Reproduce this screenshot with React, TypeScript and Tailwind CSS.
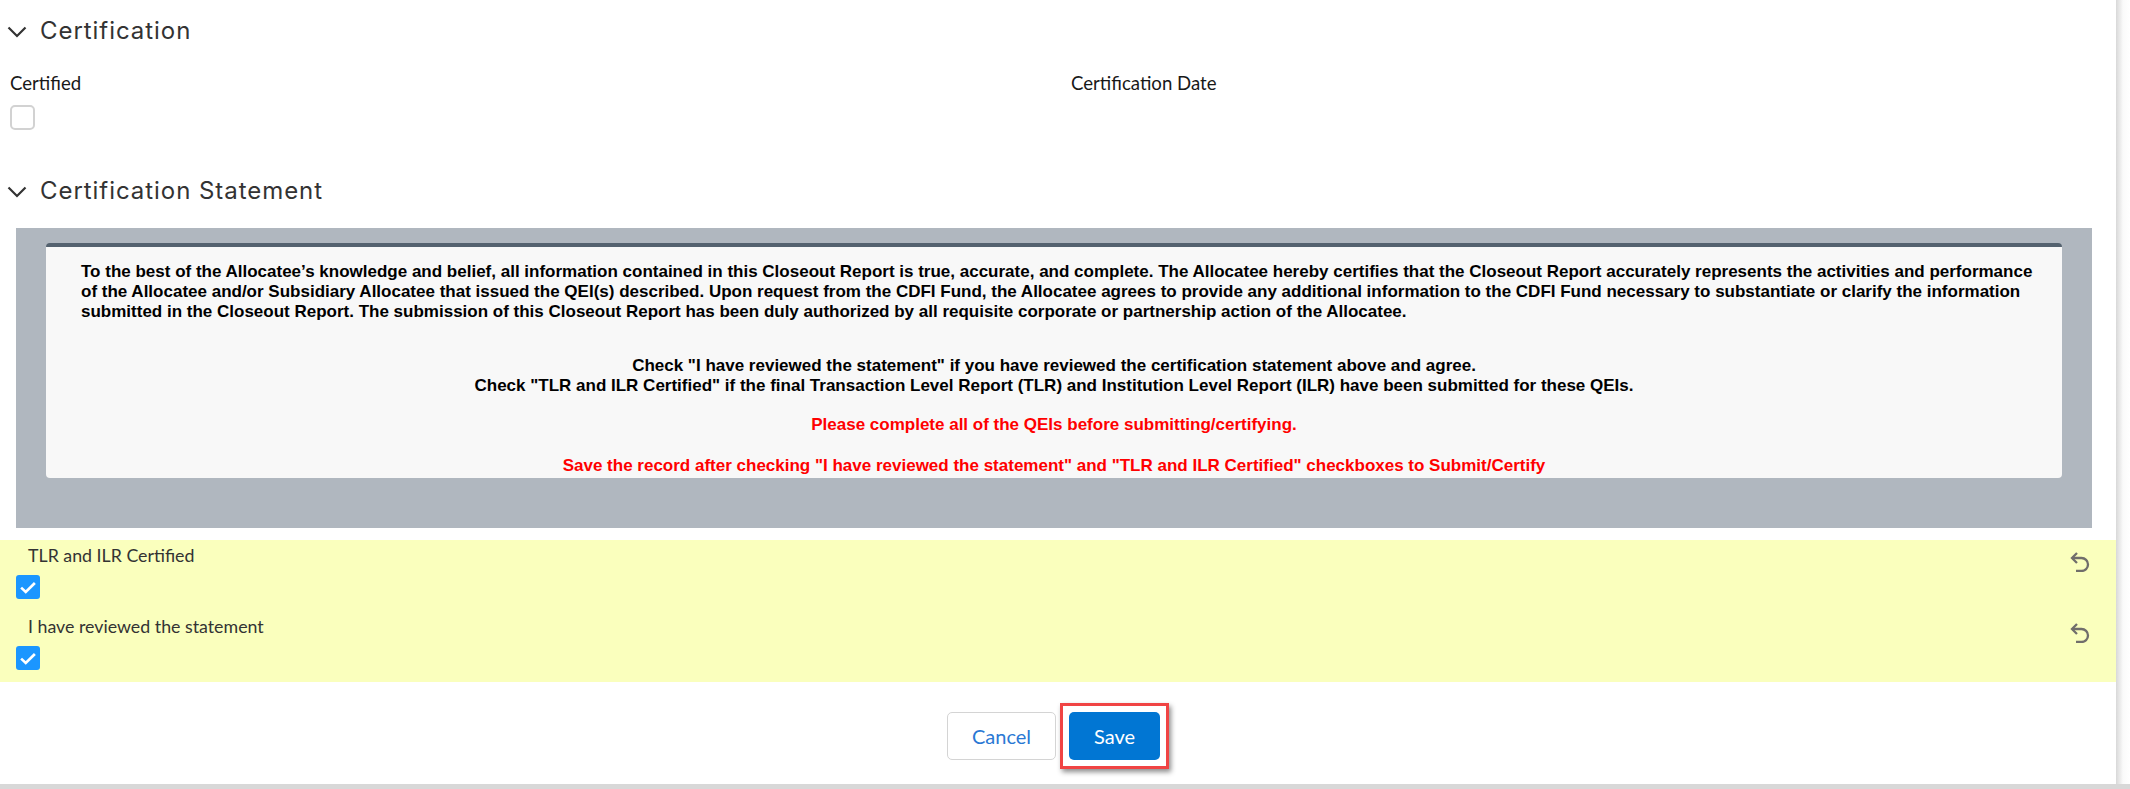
const LATO = "font-['Lato','Liberation_Sans',sans-serif]";

function Chevron() {
  return (
    <svg viewBox="0 0 20 20" className="h-[20px] w-[20px] shrink-0 text-[#333333]" fill="none" stroke="currentColor" strokeWidth="2.2">
      <path d="M1.5 6.5 L10 15 L18.5 6.5" />
    </svg>
  );
}

function SectionHeading({ title }: { title: string }) {
  return (
    <div className="flex h-[30px] items-center gap-[13px] pl-[7px]">
      <Chevron />
      <h2 className="font-['Inter',sans-serif] text-[24px] leading-[30px] tracking-[0.95px] text-[#333333]">{title}</h2>
    </div>
  );
}

function CheckedBox() {
  return (
    <div className="flex h-[24px] w-[24px] items-center justify-center rounded-[3px] bg-[#1b96ff]">
      <svg viewBox="0 0 16 16" className="h-[20px] w-[20px]" fill="none" stroke="white" strokeWidth="2.1">
        <path d="M2.5 8.5 L6.2 12 L13.5 4.8" />
      </svg>
    </div>
  );
}

function UndoIcon() {
  return (
    <svg viewBox="0 0 20 20" className="h-[20px] w-[20px] text-[#706e6b]" fill="none" stroke="currentColor" strokeWidth="2.3">
      <path d="M7 1 L2 6 L7 11" />
      <path d="M2.5 6 H11.5 A6.5 6.5 0 0 1 11.5 19 H6" />
    </svg>
  );
}

function ReviewRow({ label }: { label: string }) {
  return (
    <div className="flex h-[71px] justify-between pl-[16px] pr-[26px]">
      <div>
        <div className={`${LATO} pl-[12px] pt-[1px] text-[17.8px] leading-[29px] text-[#333333]`}>{label}</div>
        <div className="pt-[5px]">
          <CheckedBox />
        </div>
      </div>
      <div className="pt-[12px]">
        <UndoIcon />
      </div>
    </div>
  );
}

export default function App() {
  return (
    <div className="flex h-[789px] w-[2130px] flex-col overflow-hidden bg-white">
      <div className="flex h-[784px]">
        <main className="w-[2116px] shrink-0 bg-white pt-[16px]">
          <SectionHeading title="Certification" />

          <div className={`${LATO} mt-[25px] grid grid-cols-[1061px_1fr] pl-[10px] text-[18.6px] leading-[24px] text-[#181818]`}>
            <div>
              <div>Certified</div>
              <div className="mt-[10px] h-[25px] w-[25px] rounded-[5px] border-2 border-[#d2d2d2] bg-white" />
            </div>
            <div>Certification Date</div>
          </div>

          <div className="mt-[46px]">
            <SectionHeading title="Certification Statement" />
          </div>

          <section className="ml-[16px] mt-[22px] h-[300px] w-[2076px] bg-[#b0b7bf] pl-[30px] pt-[15px]">
            <div className="h-[235px] w-[2016px] rounded-[4px] border-t-4 border-[#54626f] bg-[#f8f8f8] font-['Liberation_Sans',sans-serif] text-[17px] font-bold leading-[20px] text-black">
              <p className="pl-[35px] pr-[22px] pt-[15px]">
                To the best of the Allocatee’s knowledge and belief, all information contained in this Closeout Report is true, accurate, and complete. The Allocatee hereby certifies that the Closeout Report accurately represents the activities and performance of the Allocatee and/or Subsidiary Allocatee that issued the QEI(s) described. Upon request from the CDFI Fund, the Allocatee agrees to provide any additional information to the CDFI Fund necessary to substantiate or clarify the information submitted in the Closeout Report. The submission of this Closeout Report has been duly authorized by all requisite corporate or partnership action of the Allocatee.
              </p>
              <div className="mt-[34px] text-center">
                <p>Check "I have reviewed the statement" if you have reviewed the certification statement above and agree.</p>
                <p>Check "TLR and ILR Certified" if the final Transaction Level Report (TLR) and Institution Level Report (ILR) have been submitted for these QEIs.</p>
              </div>
              <p className="mt-[19px] text-center text-[#ff0000]">Please complete all of the QEIs before submitting/certifying.</p>
              <p className="mt-[21px] text-center text-[#ff0000]">Save the record after checking "I have reviewed the statement" and "TLR and ILR Certified" checkboxes to Submit/Certify</p>
            </div>
          </section>

          <section className="mt-[12px] h-[142px] bg-[#faffbd]">
            <ReviewRow label="TLR and ILR Certified" />
            <ReviewRow label="I have reviewed the statement" />
          </section>

          <div className={`${LATO} mt-[21px] flex items-center justify-center gap-[4px] text-[20px]`}>
            <button className="h-[48px] w-[109px] rounded-[5px] border border-[#d4d4d4] bg-white text-[#2a78d4]">Cancel</button>
            <div className="border-[3px] border-[#f04444] p-[6px] shadow-[2px_3px_5px_rgba(0,0,0,0.45)]">
              <button className="block h-[48px] w-[91px] rounded-[5px] bg-[#0176d3] text-white">Save</button>
            </div>
          </div>
        </main>
        <div className="w-[14px] bg-gradient-to-r from-[#d8d8d8] via-[#fafafa] to-white" />
      </div>
      <div className="h-[5px] bg-[#d8d8d8]" />
    </div>
  );
}
